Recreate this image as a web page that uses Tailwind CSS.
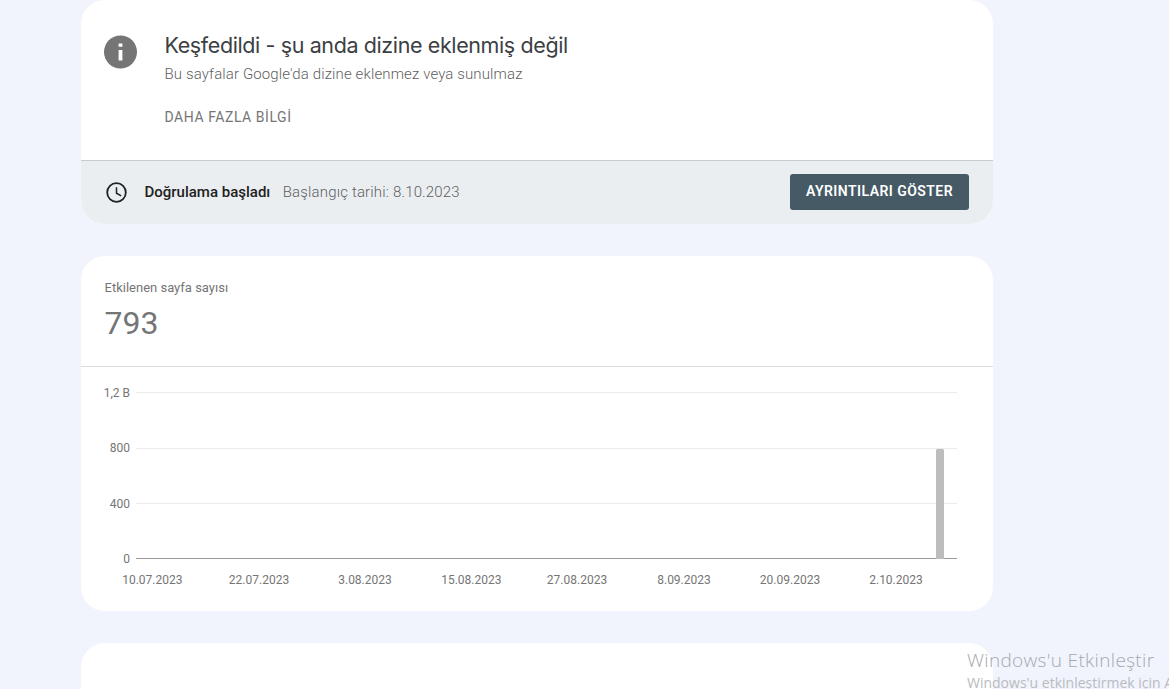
<!DOCTYPE html>
<html lang="tr">
<head>
    <meta charset="UTF-8">
    <meta name="viewport" content="width=device-width, initial-scale=1.0">
    <title>Sayfa dizine ekleme</title>
    <script src="https://cdn.jsdelivr.net/npm/@tailwindcss/browser@4"></script>
</head>
<body class="relative h-screen overflow-hidden bg-[#f1f4fc] font-['Roboto',sans-serif] text-[#757575]">
    <main class="ml-[81px] flex h-screen w-[912px] flex-col gap-8">

        <!-- Issue summary -->
        <section class="shrink-0 overflow-hidden rounded-3xl bg-white">
            <div class="flex h-40 items-start pl-[23px]">
                <svg class="mt-[35px] h-[34px] w-[33px]" viewBox="0 0 33 34">
                    <circle cx="16.5" cy="17" r="16.5" fill="#757575"/>
                    <path d="M14.6 8.4h3.8v3.4h-3.8zM14.6 15h3.8v10.6h-3.8z" fill="#fff"/>
                </svg>
                <div class="ml-[27.5px] pt-[31px]">
                    <h1 class="font-['Inter',sans-serif] text-[21.5px] leading-7 tracking-[-0.39px] whitespace-nowrap text-[#3c4043]">Keşfedildi - şu anda dizine eklenmiş değil</h1>
                    <p class="mt-[5px] text-[15px] leading-5 font-light tracking-[0.12px] whitespace-nowrap text-[#5f5f5f]">Bu sayfalar Google'da dizine eklenmez veya sunulmaz</p>
                    <a href="#" class="mt-[23px] block text-sm leading-5 tracking-[0.55px]">DAHA FAZLA BİLGİ</a>
                </div>
            </div>
            <div class="flex h-16 items-center border-t border-[#c8cccf] bg-[#eaeef1] pr-6 pb-0.5 pl-[25px]">
                <svg class="mt-0.5 h-[22px] w-[22px]" viewBox="0 0 22 22" fill="none" stroke="#202124">
                    <circle cx="10.5" cy="10.5" r="9.3" stroke-width="1.8"/>
                    <path d="M10.5 5.2v6l4.7 2.7" stroke-width="1.5"/>
                </svg>
                <span class="ml-[16.5px] text-[15px] leading-5 font-medium text-[#212121]">Doğrulama başladı</span>
                <span class="ml-[12.5px] text-[15px] leading-5 font-light tracking-[0.16px] text-[#5f5f5f]">Başlangıç tarihi: 8.10.2023</span>
                <button class="ml-auto h-9 w-[179px] rounded-[3px] bg-[#455a64] pb-0.5 text-sm font-semibold tracking-[0.45px] whitespace-nowrap text-white">AYRINTILARI GÖSTER</button>
            </div>
        </section>

        <!-- Affected pages -->
        <section class="h-[355px] shrink-0 overflow-hidden rounded-3xl bg-white">
            <div class="h-[111px] border-b border-[#dcdcdc] pt-[22px] pl-[23.5px]">
                <div class="text-[13px] leading-5">Etkilenen sayfa sayısı</div>
                <div class="mt-[5px] text-[32px] leading-10">793</div>
            </div>
            <svg class="block h-[244px] w-[912px] text-xs" viewBox="0 0 912 244" fill="#757575">
                <g fill="#ebebeb">
                    <rect x="55" y="25" width="821" height="1"/>
                    <rect x="55" y="81" width="821" height="1"/>
                    <rect x="55" y="136" width="821" height="1"/>
                </g>
                <rect x="55" y="191" width="821" height="1" fill="#999"/>
                <path d="M855 192V83.5a1.5 1.5 0 0 1 1.5-1.5h5a1.5 1.5 0 0 1 1.5 1.5V192z" fill="#bdbdbd"/>
                <g text-anchor="end">
                    <text x="49" y="30">1,2 B</text>
                    <text x="49" y="85">800</text>
                    <text x="49" y="141">400</text>
                    <text x="49" y="196">0</text>
                </g>
                <g text-anchor="middle">
                    <text x="71.3" y="217">10.07.2023</text>
                    <text x="178" y="217">22.07.2023</text>
                    <text x="284" y="217">3.08.2023</text>
                    <text x="390.3" y="217">15.08.2023</text>
                    <text x="496" y="217">27.08.2023</text>
                    <text x="603" y="217">8.09.2023</text>
                    <text x="709" y="217">20.09.2023</text>
                    <text x="815" y="217">2.10.2023</text>
                </g>
            </svg>
        </section>

        <section class="grow rounded-t-3xl bg-white"></section>
    </main>

    <!-- Windows activation watermark -->
    <div class="absolute top-[647px] left-[967px] h-[42px] w-[202px] overflow-hidden font-['Open_Sans',sans-serif] whitespace-nowrap text-[#b9bbc0]">
        <div class="text-[19px] leading-[26px] font-light tracking-[0.33px] text-[#a6a8ac]">Windows'u Etkinleştir</div>
        <div class="text-sm leading-5">Windows'u etkinleştirmek için A</div>
    </div>
</body>
</html>
